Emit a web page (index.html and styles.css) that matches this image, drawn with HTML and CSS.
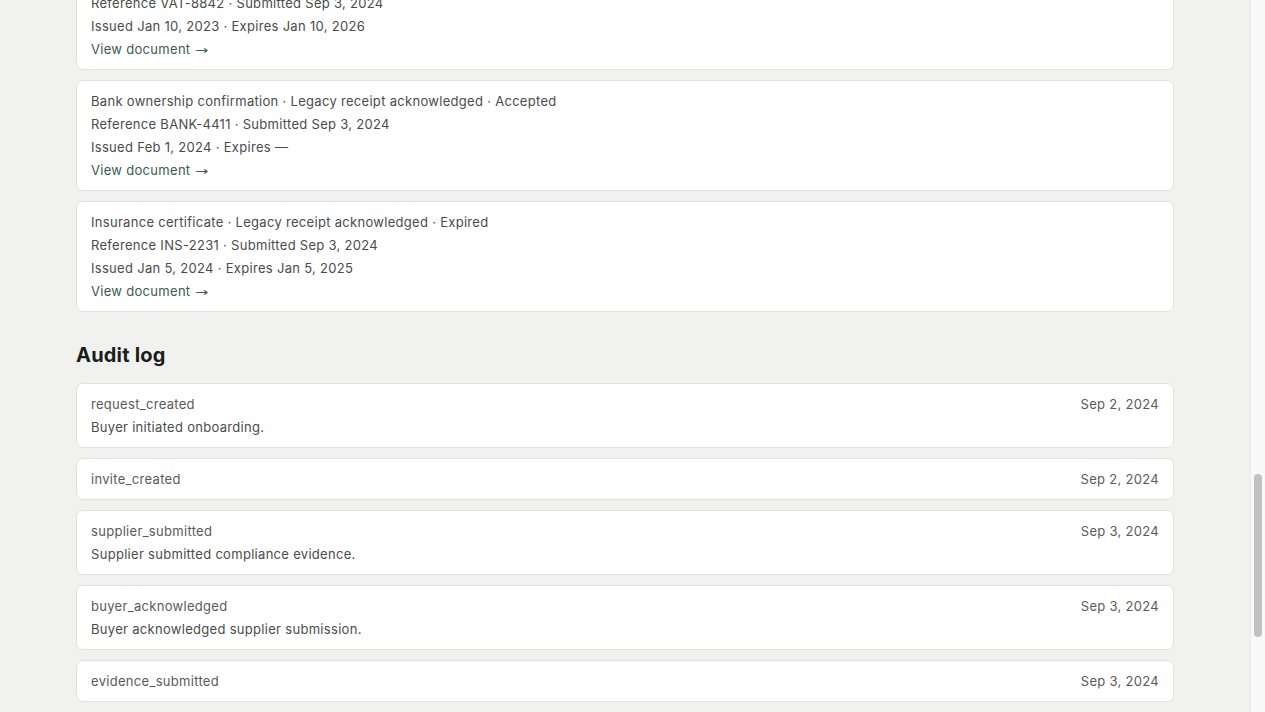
FILE: index.html
```html
<!DOCTYPE html>
<html lang="en">
<head>
<meta charset="utf-8">
<title>Supplier onboarding</title>
<link rel="stylesheet" href="styles.css">
</head>
<body>
<main class="page">
  <section class="documents">
    <article class="card doc">
      <p>VAT registration certificate · Legacy receipt acknowledged · Accepted</p>
      <p>Reference VAT-8842 · Submitted Sep 3, 2024</p>
      <p>Issued Jan 10, 2023 · Expires Jan 10, 2026</p>
      <a class="link" href="#">View document <span class="arrow">→</span></a>
    </article>
    <article class="card doc">
      <p>Bank ownership confirmation · Legacy receipt acknowledged · Accepted</p>
      <p>Reference BANK-4411 · Submitted Sep 3, 2024</p>
      <p>Issued Feb 1, 2024 · Expires —</p>
      <a class="link" href="#">View document <span class="arrow">→</span></a>
    </article>
    <article class="card doc">
      <p>Insurance certificate · Legacy receipt acknowledged · Expired</p>
      <p>Reference INS-2231 · Submitted Sep 3, 2024</p>
      <p>Issued Jan 5, 2024 · Expires Jan 5, 2025</p>
      <a class="link" href="#">View document <span class="arrow">→</span></a>
    </article>
  </section>

  <h2 class="section-title">Audit log</h2>
  <section class="audit">
    <article class="card event">
      <div class="event-body">
        <p class="event-name">request_created</p>
        <p>Buyer initiated onboarding.</p>
      </div>
      <span class="event-date">Sep 2, 2024</span>
    </article>
    <article class="card event">
      <div class="event-body">
        <p class="event-name">invite_created</p>
      </div>
      <span class="event-date">Sep 2, 2024</span>
    </article>
    <article class="card event">
      <div class="event-body">
        <p class="event-name">supplier_submitted</p>
        <p>Supplier submitted compliance evidence.</p>
      </div>
      <span class="event-date">Sep 3, 2024</span>
    </article>
    <article class="card event">
      <div class="event-body">
        <p class="event-name">buyer_acknowledged</p>
        <p>Buyer acknowledged supplier submission.</p>
      </div>
      <span class="event-date">Sep 3, 2024</span>
    </article>
    <article class="card event">
      <div class="event-body">
        <p class="event-name">evidence_submitted</p>
      </div>
      <span class="event-date">Sep 3, 2024</span>
    </article>
  </section>
</main>
<div class="scrollbar" aria-hidden="true"><div class="scrollbar-thumb"></div></div>
</body>
</html>
```
FILE: styles.css
```css
html {
  background: #f1f2f0;
}

body {
  margin: 0;
  padding-right: 15px;
  font-family: "Inter", "Liberation Sans", sans-serif;
  font-size: 13px;
  letter-spacing: 0.3px;
  color: #4a4c4a;
}

.page {
  max-width: 1098px;
  margin: -41px auto 0;
  padding-bottom: 10px;
}

.documents,
.audit {
  display: flex;
  flex-direction: column;
  gap: 10px;
}

.card {
  background: #ffffff;
  border: 1px solid #dfe2de;
  border-radius: 7px;
  padding: 8.5px 14px;
  line-height: 23px;
}

.card p {
  margin: 0;
}

.doc {
  display: flex;
  flex-direction: column;
  align-items: flex-start;
}

.link {
  display: block;
  height: 23px;
  color: #3d5b50;
  text-decoration: none;
}

.arrow {
  display: inline-block;
  margin-left: 1px;
  font-family: "DejaVu Sans", sans-serif;
  font-size: 12px;
  line-height: 1;
  letter-spacing: 0;
  transform: scaleX(1.3);
  transform-origin: left center;
}

.section-title {
  margin: 31px 0 16px;
  font-size: 20px;
  line-height: 24px;
  font-weight: 700;
  letter-spacing: 0.2px;
  color: #1b1d1b;
}

.event {
  display: flex;
  justify-content: space-between;
  align-items: flex-start;
}

.event-name,
.event-date {
  color: #595b59;
}

.scrollbar {
  position: fixed;
  top: 0;
  right: 0;
  bottom: 0;
  width: 15px;
  background: #f9f9f9;
  border-left: 1px solid #ececec;
  box-sizing: border-box;
}

.scrollbar-thumb {
  position: absolute;
  top: 474px;
  left: 3px;
  width: 8px;
  height: 163px;
  border-radius: 4px;
  background: #c1c1c1;
}
```
